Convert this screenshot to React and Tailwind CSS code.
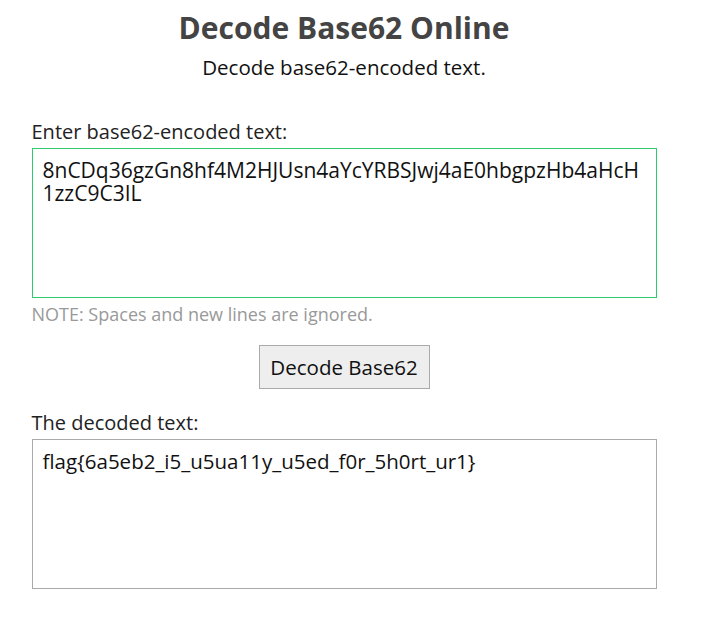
import React from "react";

const encoded = "8nCDq36gzGn8hf4M2HJUsn4aYcYRBSJwj4aE0hbgpzHb4aHcH1zzC9C3IL";
const decoded = "flag{6a5eb2_i5_u5ua11y_u5ed_f0r_5h0rt_ur1}";

const App = () => {
  return (
    <div className="w-[688px] bg-white text-[#222] font-['Open_Sans',sans-serif]">
      <div className="w-[625px] mx-auto pt-[7px]">
        <h1 className="text-center text-[30px] leading-[42px] font-bold text-[#444]">
          Decode Base62 Online
        </h1>
        <p className="text-center text-[20.5px] leading-[28px] text-[#111] mt-[4px]">
          Decode base62-encoded text.
        </p>

        <label className="block mt-[38px] text-[20px] leading-[26px] text-[#222]">
          Enter base62-encoded text:
        </label>
        <textarea
          readOnly
          defaultValue={encoded}
          className="block w-full h-[150px] mt-[3px] px-[10px] py-[10px] border border-[#2ecc71] outline-none resize-none break-all text-[21px] leading-[23px] text-[#111] font-['Open_Sans',sans-serif]"
        />
        <p className="mt-[4px] text-[18px] leading-[24px] text-[#999]">
          NOTE: Spaces and new lines are ignored.
        </p>

        <div className="flex justify-center mt-[19px]">
          <button className="w-[171px] h-[44px] bg-[#eeeeee] border border-[#aaa] text-[20.5px] text-[#111]">
            Decode Base62
          </button>
        </div>

        <label className="block mt-[21px] text-[20px] leading-[26px] text-[#222]">
          The decoded text:
        </label>
        <textarea
          readOnly
          defaultValue={decoded}
          className="block w-full h-[150px] mt-[3px] px-[10px] py-[10px] border border-[#aaa] outline-none resize-none text-[20.5px] leading-[23px] text-[#111] font-['Open_Sans',sans-serif]"
        />
      </div>
    </div>
  );
};

export default App;
